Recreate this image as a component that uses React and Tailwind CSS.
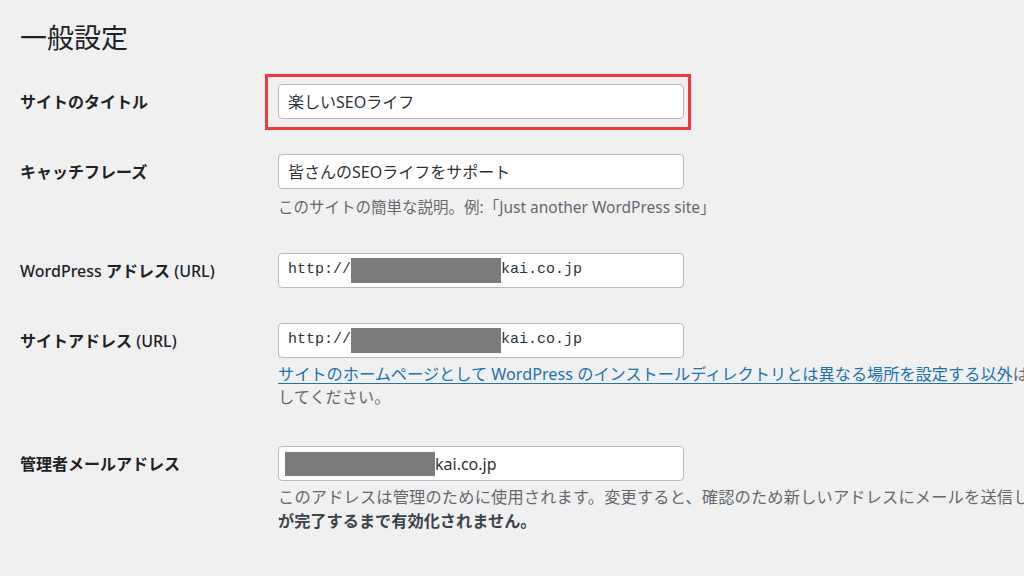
import React from "react";

const FONT = {
  fontFamily: '"Noto Sans", "Noto Sans CJK JP", sans-serif',
};
const MONO = {
  fontFamily: '"Liberation Mono", "DejaVu Sans Mono", monospace',
};

function Field({ children, className = "" }) {
  return (
    <div
      className={
        "relative flex h-[35px] w-[406px] items-center overflow-hidden rounded-[4px] border border-[#b9babd] bg-white text-[16px] text-[#2c3338] " +
        className
      }
    >
      {children}
    </div>
  );
}

function Redacted({ className = "" }) {
  return <span className={"inline-block bg-[#7b7b7b] " + className} />;
}

function Row({ label, children, className = "" }) {
  return (
    <div className={"flex " + className}>
      <div className="flex h-[35px] w-[258px] shrink-0 items-center text-[16px] font-bold text-[#1d2327]">
        {label}
      </div>
      <div className="flex flex-col">{children}</div>
    </div>
  );
}

export default function App() {
  return (
    <div
      className="h-[576px] w-[1024px] overflow-hidden bg-[#f0f0f1] pl-[20px]"
      style={FONT}
    >
      <h1 className="mt-[21px] h-[34px] text-[27px] leading-[34px] font-normal text-[#1d2327]">
        一般設定
      </h1>

      <Row label="サイトのタイトル" className="mt-[29px]">
        <div className="relative">
          <Field className="pl-[9px]">楽しいSEOライフ</Field>
          <div className="pointer-events-none absolute top-[-10px] right-[-7px] bottom-[-11px] left-[-13px] border-[3px] border-[#f23a3c]" />
        </div>
      </Row>

      <Row label="キャッチフレーズ" className="mt-[35px]">
        <Field className="pl-[9px]">皆さんのSEOライフをサポート</Field>
        <p className="mt-[6px] text-[15.5px] leading-[24px] whitespace-nowrap text-[#646970]">
          このサイトの簡単な説明。例:「Just another WordPress site」
        </p>
      </Row>

      <Row
        label={
          <span>
            <span className="font-medium">WordPress</span> アドレス{" "}
            <span className="font-medium">(URL)</span>
          </span>
        }
        className="mt-[34px]"
      >
        <Field className="pl-[9px]">
          <span className="text-[15px]" style={MONO}>
            http://
          </span>
          <Redacted className="h-[25px] w-[150px]" />
          <span className="text-[15px]" style={MONO}>
            kai.co.jp
          </span>
        </Field>
      </Row>

      <Row
        label={
          <span>
            サイトアドレス <span className="font-medium">(URL)</span>
          </span>
        }
        className="mt-[35px]"
      >
        <Field className="pl-[9px]">
          <span className="text-[15px]" style={MONO}>
            http://
          </span>
          <Redacted className="h-[25px] w-[150px]" />
          <span className="text-[15px]" style={MONO}>
            kai.co.jp
          </span>
        </Field>
        <div className="mt-[5px] text-[16.2px] leading-[23px] whitespace-nowrap text-[#646970]">
          <p>
            <a href="#" className="text-[#2271b1] underline underline-offset-[3px]">
              サイトのホームページとして WordPress のインストールディレクトリとは異なる場所を設定する以外
            </a>
            は、ここに WordPress アドレスと同じものを入力
          </p>
          <p>してください。</p>
        </div>
      </Row>

      <Row label="管理者メールアドレス" className="mt-[37px]">
        <Field className="pl-[6px]">
          <Redacted className="h-[24px] w-[150px]" />
          <span>kai.co.jp</span>
        </Field>
        <div className="mt-[4px] text-[16.2px] leading-[24px] whitespace-nowrap text-[#646970]">
          <p className="tracking-[0.2px]">
            このアドレスは管理のために使用されます。変更すると、確認のため新しいアドレスにメールを送信します。
            <strong className="text-[#50575e]">新しいアドレスは確認</strong>
          </p>
          <p>
            <strong className="text-[#3c434a]">が完了するまで有効化されません。</strong>
          </p>
        </div>
      </Row>
    </div>
  );
}
